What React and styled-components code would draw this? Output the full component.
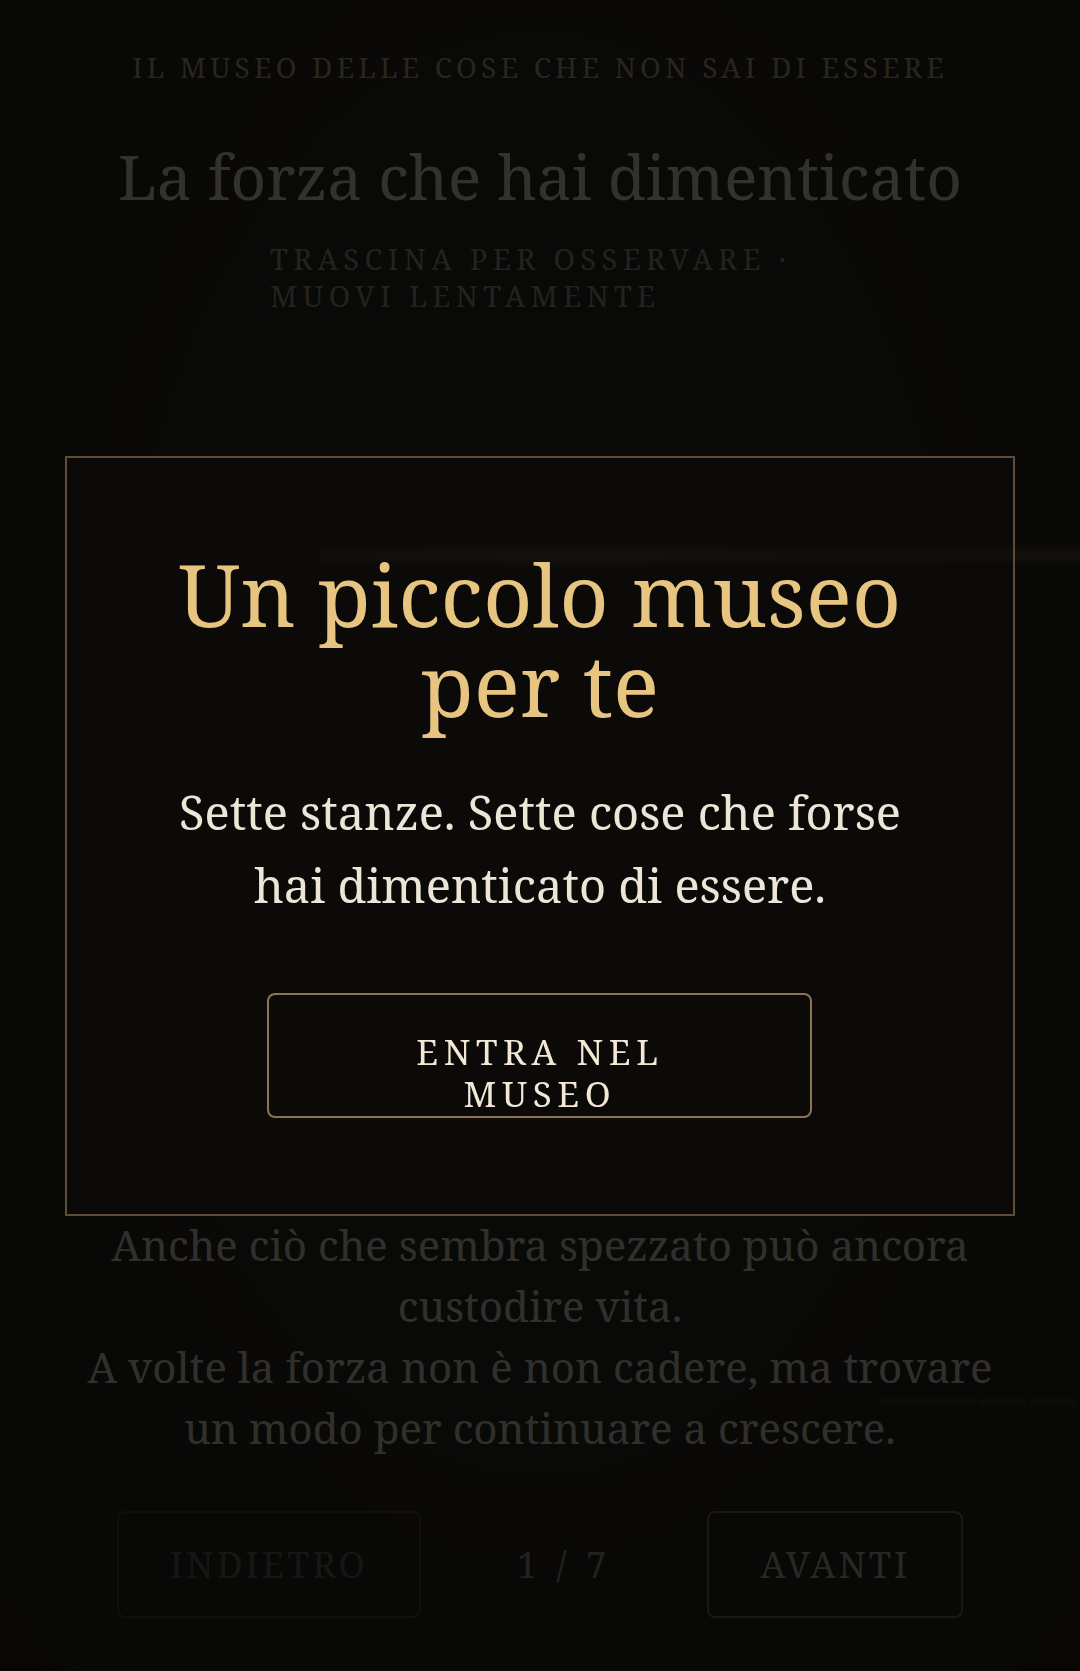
import React from 'react'
import styled, { createGlobalStyle } from 'styled-components'

const serif = `'Noto Serif', 'DejaVu Serif', serif`

const GlobalStyle = createGlobalStyle`
  html, body {
    margin: 0;
    padding: 0;
    background: #0a0908;
  }
  * {
    box-sizing: border-box;
  }
`

const App = () => {
  return (
    <>
      <GlobalStyle />
      <Page>
        <Kicker>IL MUSEO DELLE COSE CHE NON SAI DI ESSERE</Kicker>
        <RoomTitle>La forza che hai dimenticato</RoomTitle>
        <Hint>TRASCINA PER OSSERVARE · MUOVI LENTAMENTE</Hint>
        <Stage />
        <Caption>
          Anche ciò che sembra spezzato può ancora custodire vita.
          <br />
          A volte la forza non è non cadere, ma trovare un modo per continuare a crescere.
        </Caption>
        <Nav>
          <NavButton $disabled>INDIETRO</NavButton>
          <Counter>1 / 7</Counter>
          <NavButton>AVANTI</NavButton>
        </Nav>
      </Page>
      <Overlay>
        <Modal>
          <ModalTitle>Un piccolo museo per te</ModalTitle>
          <ModalText>Sette stanze. Sette cose che forse hai dimenticato di essere.</ModalText>
          <EnterButton>ENTRA NEL MUSEO</EnterButton>
        </Modal>
      </Overlay>
    </>
  )
}

export default App

const Page = styled.main`
  min-height: 1671px;
  display: flex;
  flex-direction: column;
  align-items: center;
  padding: 48px 0 53px;
  font-family: ${serif};
  background:
    linear-gradient(180deg, transparent, rgba(160, 125, 80, 0.22) 30%, rgba(175, 138, 88, 0.32) 55%, transparent)
      320px 543px / 760px 24px no-repeat,
    radial-gradient(closest-side, rgba(200, 160, 105, 0.28), transparent)
      360px 541px / 440px 28px no-repeat,
    repeating-linear-gradient(90deg, rgba(140, 95, 55, 0.2) 0 46px, rgba(140, 95, 55, 0.08) 46px 50px)
      880px 1398px / 200px 8px no-repeat,
    radial-gradient(ellipse at 50% 45%, #171614 0%, #100f0e 55%, #0a0908 100%);
`

const Kicker = styled.div`
  font-size: 28px;
  line-height: 39px;
  letter-spacing: 0.15em;
  color: #ae9a7c;
  text-align: center;
`

const RoomTitle = styled.h1`
  margin: 52px 0 0;
  font-size: 62px;
  line-height: 74px;
  font-weight: 400;
  color: #dcd6ce;
  text-align: center;
`

const Hint = styled.div`
  margin-top: 27px;
  width: 540px;
  font-size: 29px;
  line-height: 37px;
  letter-spacing: 0.185em;
  color: #958a7b;
  text-align: left;
`

const Stage = styled.div`
  flex: 1;
  width: 100%;
`

const Caption = styled.p`
  margin: 0;
  max-width: 940px;
  font-size: 42px;
  line-height: 61px;
  color: #d2ccc1;
  text-align: center;
`

const Nav = styled.nav`
  margin-top: 53px;
  display: flex;
  align-items: center;
  justify-content: center;
  gap: 96px;
`

const NavButton = styled.button`
  height: 107px;
  padding: 0 51px;
  border: 2px solid ${p => (p.$disabled ? '#34302c' : '#66574a')};
  border-radius: 8px;
  background: transparent;
  font-family: ${serif};
  font-size: 36px;
  letter-spacing: 3px;
  color: ${p => (p.$disabled ? '#57524d' : '#aaa39a')};
`

const Counter = styled.span`
  font-size: 36px;
  letter-spacing: 5px;
  color: #8f897f;
`

const Overlay = styled.div`
  position: fixed;
  inset: 0;
  display: flex;
  align-items: center;
  justify-content: center;
  background: rgba(8, 7, 6, 0.8);
  font-family: ${serif};
`

const Modal = styled.section`
  width: 88%;
  padding: 91px 80px 96px;
  border: 2px solid #5d4d34;
  background: rgba(14, 12, 10, 0.4);
  text-align: center;
`

const ModalTitle = styled.h2`
  margin: 0 0 47px;
  font-size: 86px;
  line-height: 90px;
  font-weight: 400;
  color: #e7c580;
`

const ModalText = styled.p`
  margin: 0 0 71px;
  font-size: 47px;
  line-height: 73px;
  color: #ede5d6;
`

const EnterButton = styled.button`
  display: block;
  width: 545px;
  margin: 0 auto;
  padding: 36px 80px 1px;
  border: 2px solid #8b7550;
  border-radius: 8px;
  background: transparent;
  font-family: ${serif};
  font-size: 35px;
  line-height: 42px;
  letter-spacing: 0.16em;
  color: #f2e8d5;
`
